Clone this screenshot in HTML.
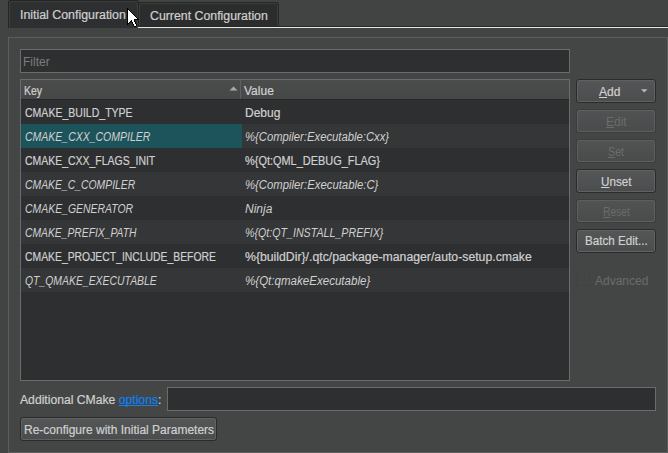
<!DOCTYPE html>
<html><head><meta charset="utf-8">
<style>
*{box-sizing:border-box;margin:0;padding:0}
html,body{width:668px;height:453px;overflow:hidden;background:#424443;font-family:"Liberation Sans",sans-serif;font-size:12px;color:#d0d0d0}
.a{position:absolute}
.t{position:absolute;white-space:nowrap;line-height:14px;transform-origin:0 0;-webkit-text-stroke:0.2px currentColor}
.tab{position:absolute;border:1px solid #3c3e3e;border-bottom:none;border-radius:3px 3px 0 0}
.frame{position:absolute;left:8px;top:37px;width:660px;height:416px;border:1px solid #5c5e5d;background:#444645}
.inp{position:absolute;background:#2e2f30;border:1px solid #6a6c6b}
.tbl{position:absolute;left:20px;top:79px;width:550px;height:302px;background:#2e2f30;border:1px solid #6a6c6b;overflow:hidden}
.hdr{position:absolute;left:0;top:0;width:548px;height:20px;background:linear-gradient(#4b4d4c,#464847);border-bottom:1px solid #262727}
.row{position:absolute;left:0;width:548px;height:24px}
.alt{background:#353637}
.i{font-style:italic;-webkit-text-stroke:0}
.btn{position:absolute;left:576px;width:80px;height:24px;border:1px solid #2a2c2c;border-radius:3px;background:linear-gradient(#545657,#4a4c4d);box-shadow:inset 0 0 0 1px #606261}
.dis{position:absolute;left:577px;width:78px;height:22px;border:1px solid #5d5f5e;border-radius:2px;background:linear-gradient(#505253,#4a4c4c);box-shadow:0 0 0 1px rgba(0,0,0,0.12)}
u{text-decoration:underline;text-underline-offset:1px;text-decoration-skip-ink:none}
.dt{color:#6a6c6c;-webkit-text-stroke:0}
</style></head><body>
<!-- tabs -->
<div class="tab" style="left:8px;top:0px;width:131px;height:28px;background:#2e2f30;border-color:#242626;box-shadow:inset 1px 1px 0 #3c3e3e,inset -1px 0 0 #3c3e3e"></div>
<div class="t" style="left:20px;top:8px;transform:scaleX(1.03)">Initial Configuration</div>
<div class="tab" style="left:138px;top:2px;width:141px;height:25px;background:#2b2d2d;border-color:#262828;box-shadow:inset 1px 1px 0 #3b3d3d,inset -1px 0 0 #3b3d3d"></div><div class="a" style="left:138px;top:26px;width:530px;height:1px;background:#262828"></div>
<div class="t" style="left:150px;top:9px;transform:scaleX(1.027)">Current Configuration</div>
<div class="a" style="left:138px;top:27px;width:530px;height:1px;background:#e6e6e6"></div>

<div class="frame"></div>

<div class="inp" style="left:20px;top:49px;width:550px;height:24px"></div>
<div class="t" style="left:23px;top:55px;color:#7b7d7d;-webkit-text-stroke:0">Filter</div>

<div class="tbl">
  <div class="hdr"></div>
  <div class="a" style="left:219px;top:0px;width:1px;height:19px;background:#5e605f"></div>
  <svg class="a" style="left:208px;top:6px" width="9" height="5"><polygon points="0.5,4.5 4.5,0.5 8.5,4.5" fill="#a9abab"/></svg>
  <div class="t" style="left:3px;top:4px;transform:scaleX(0.87)">Key</div>
  <div class="t" style="left:223px;top:4px">Value</div>
  <div class="row" style="top:20px"></div>
  <div class="row alt" style="top:44px"><div class="a" style="left:0;top:0;width:221px;height:24px;background:#1d545c"></div></div>
  <div class="row" style="top:68px"></div>
  <div class="row alt" style="top:92px"></div>
  <div class="row" style="top:116px"></div>
  <div class="row alt" style="top:140px"></div>
  <div class="row" style="top:164px"></div>
  <div class="row alt" style="top:188px"></div>
</div>
<!-- keys -->
<div class="t" style="left:25px;top:106px;transform:scaleX(0.877)">CMAKE_BUILD_TYPE</div>
<div class="t i" style="left:25px;top:130px;transform:scaleX(0.874)">CMAKE_CXX_COMPILER</div>
<div class="t" style="left:25px;top:154px;transform:scaleX(0.872)">CMAKE_CXX_FLAGS_INIT</div>
<div class="t i" style="left:25px;top:178px;transform:scaleX(0.866)">CMAKE_C_COMPILER</div>
<div class="t i" style="left:25px;top:202px;transform:scaleX(0.87)">CMAKE_GENERATOR</div>
<div class="t i" style="left:25px;top:226px;transform:scaleX(0.86)">CMAKE_PREFIX_PATH</div>
<div class="t" style="left:25px;top:250px;transform:scaleX(0.865)">CMAKE_PROJECT_INCLUDE_BEFORE</div>
<div class="t i" style="left:25px;top:274px;transform:scaleX(0.868)">QT_QMAKE_EXECUTABLE</div>
<!-- values -->
<div class="t" style="left:245px;top:106px">Debug</div>
<div class="t i" style="left:245px;top:130px;transform:scaleX(0.939)">%{Compiler:Executable:Cxx}</div>
<div class="t" style="left:245px;top:154px;transform:scaleX(0.912)">%{Qt:QML_DEBUG_FLAG}</div>
<div class="t i" style="left:245px;top:178px;transform:scaleX(0.943)">%{Compiler:Executable:C}</div>
<div class="t i" style="left:245px;top:202px">Ninja</div>
<div class="t i" style="left:245px;top:226px;transform:scaleX(0.888)">%{Qt:QT_INSTALL_PREFIX}</div>
<div class="t" style="left:245px;top:250px;transform:scaleX(1.021)">%{buildDir}/.qtc/package-manager/auto-setup.cmake</div>
<div class="t i" style="left:245px;top:274px;transform:scaleX(0.963)">%{Qt:qmakeExecutable}</div>

<!-- buttons -->
<div class="btn" style="top:79px"></div>
<div class="t" style="left:599px;top:85px"><u>A</u>dd</div>
<svg class="a" style="left:641px;top:89px" width="7" height="4"><polygon points="0,0.2 6.5,0.2 3.25,3.4" fill="#b8baba"/></svg>
<div class="dis" style="top:110px"></div>
<div class="t dt" style="left:606px;top:115px"><u>E</u>dit</div>
<div class="dis" style="top:140px"></div>
<div class="t dt" style="left:608px;top:145px;transform:scaleX(0.89)"><u>S</u>et</div>
<div class="btn" style="top:169px"></div>
<div class="t" style="left:601px;top:175px;transform:scaleX(0.97)"><u>U</u>nset</div>
<div class="dis" style="top:200px"></div>
<div class="t dt" style="left:603px;top:205px;transform:scaleX(0.86)"><u>R</u>eset</div>
<div class="btn" style="top:229px"></div>
<div class="t" style="left:585px;top:234px;transform:scaleX(0.968)">Batch Edit...</div>
<div class="a" style="left:576px;top:273px;width:14px;height:13px;border:1px solid rgba(0,0,0,0.035)"></div>
<div class="t dt" style="left:595px;top:274px">Advanced</div>

<div class="t" style="left:20px;top:393px;transform:scaleX(1.014)">Additional CMake <span style="color:#0d80f2;text-decoration:underline;text-decoration-skip-ink:none">options</span>:</div>
<div class="inp" style="left:167px;top:387px;width:489px;height:24px"></div>
<div class="btn" style="left:20px;top:417px;width:197px"></div>
<div class="t" style="left:24px;top:423px">Re-configure with Initial Parameters</div>

<!-- cursor -->
<svg class="a" style="left:127px;top:8px" width="12" height="19" shape-rendering="crispEdges"><path d="M1 2h1v1h-1zM1 3h1v1h-1zM2 3h1v1h-1zM1 4h1v1h-1zM2 4h1v1h-1zM3 4h1v1h-1zM1 5h1v1h-1zM2 5h1v1h-1zM3 5h1v1h-1zM4 5h1v1h-1zM1 6h1v1h-1zM2 6h1v1h-1zM3 6h1v1h-1zM4 6h1v1h-1zM5 6h1v1h-1zM1 7h1v1h-1zM2 7h1v1h-1zM3 7h1v1h-1zM4 7h1v1h-1zM5 7h1v1h-1zM6 7h1v1h-1zM1 8h1v1h-1zM2 8h1v1h-1zM3 8h1v1h-1zM4 8h1v1h-1zM5 8h1v1h-1zM6 8h1v1h-1zM7 8h1v1h-1zM1 9h1v1h-1zM2 9h1v1h-1zM3 9h1v1h-1zM4 9h1v1h-1zM5 9h1v1h-1zM6 9h1v1h-1zM7 9h1v1h-1zM8 9h1v1h-1zM1 10h1v1h-1zM2 10h1v1h-1zM3 10h1v1h-1zM4 10h1v1h-1zM5 10h1v1h-1zM6 10h1v1h-1zM7 10h1v1h-1zM8 10h1v1h-1zM9 10h1v1h-1zM1 11h1v1h-1zM2 11h1v1h-1zM3 11h1v1h-1zM4 11h1v1h-1zM5 11h1v1h-1zM6 11h1v1h-1zM1 12h1v1h-1zM2 12h1v1h-1zM3 12h1v1h-1zM5 12h1v1h-1zM6 12h1v1h-1zM1 13h1v1h-1zM2 13h1v1h-1zM5 13h1v1h-1zM6 13h1v1h-1zM1 14h1v1h-1zM6 14h1v1h-1zM7 14h1v1h-1zM6 15h1v1h-1zM7 15h1v1h-1zM7 16h1v1h-1zM8 16h1v1h-1zM7 17h1v1h-1zM8 17h1v1h-1z" fill="#fff"/><path d="M0 0h1v1h-1zM0 1h1v1h-1zM1 1h1v1h-1zM0 2h1v1h-1zM2 2h1v1h-1zM0 3h1v1h-1zM3 3h1v1h-1zM0 4h1v1h-1zM4 4h1v1h-1zM0 5h1v1h-1zM5 5h1v1h-1zM0 6h1v1h-1zM6 6h1v1h-1zM0 7h1v1h-1zM7 7h1v1h-1zM0 8h1v1h-1zM8 8h1v1h-1zM0 9h1v1h-1zM9 9h1v1h-1zM0 10h1v1h-1zM10 10h1v1h-1zM0 11h1v1h-1zM7 11h1v1h-1zM8 11h1v1h-1zM9 11h1v1h-1zM10 11h1v1h-1zM11 11h1v1h-1zM0 12h1v1h-1zM4 12h1v1h-1zM7 12h1v1h-1zM0 13h1v1h-1zM3 13h1v1h-1zM4 13h1v1h-1zM7 13h1v1h-1zM0 14h1v1h-1zM2 14h1v1h-1zM5 14h1v1h-1zM8 14h1v1h-1zM0 15h1v1h-1zM1 15h1v1h-1zM5 15h1v1h-1zM8 15h1v1h-1zM0 16h1v1h-1zM6 16h1v1h-1zM9 16h1v1h-1zM6 17h1v1h-1zM9 17h1v1h-1zM7 18h1v1h-1zM8 18h1v1h-1z" fill="#000"/></svg>
</body></html>
